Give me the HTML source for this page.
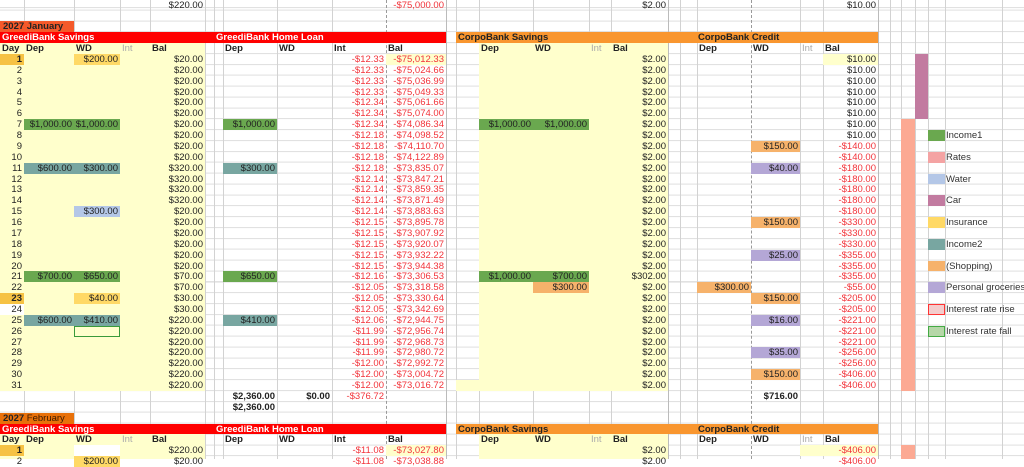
<!DOCTYPE html>
<html><head><meta charset="utf-8"><style>
*{margin:0;padding:0}
body{width:1024px;height:459px;overflow:hidden;position:relative;background:#fff;font-family:"Liberation Sans",Arial,sans-serif;font-size:9.5px;color:#222}
#hg{position:absolute;left:0;top:0;width:1024px;height:459px;background-image:repeating-linear-gradient(to bottom,#dedede 0,#dedede 1px,transparent 1px,transparent 10.87px);background-position:0 9.6px}
.v{position:absolute;top:0;height:459px;width:1px;background:#d2d2d2}
.vd{position:absolute;top:0;height:459px;width:0;border-left:1px dashed #9a9a9a}
.bk{position:absolute}
.r{position:absolute;left:0;width:1024px;height:10.87px}
.r>div{position:absolute;top:0;height:10.87px;line-height:11px;text-align:right;padding-right:2px;box-sizing:border-box;white-space:nowrap;overflow:hidden}
.a{left:0;width:24px}.b{left:24px;width:50px}.c{left:74px;width:46px}.d{left:150px;width:55px}
.e{left:223px;width:54px}.f{left:277px;width:55px}.g{left:332px;width:54px}.h{left:386px;width:60px}
.i{left:479px;width:54px}.j{left:533px;width:56px}.k{left:611px;width:57px}
.l{left:697px;width:54px}.m{left:751px;width:49px}.o{left:823px;width:55px}
.G{background:#6aa84f}.T{background:#78a6a1}.Y{background:#ffd966}.B{background:#b4c7e7}.O{background:#f6b26b}.P{background:#b4a7d6}
.R{color:#f2333a}.D{background:#f6c244;font-weight:bold}.W{background:#fff}
.hd>div{text-align:left;font-weight:bold;padding-left:2px}
.q{color:#aaa;font-weight:normal!important}
.lg{left:928px!important;width:17px}
.lt{left:945px!important;width:79px;text-align:left!important;padding-left:1px;color:#333}
.x{font-weight:bold}
</style></head><body>
<div id="hg"></div>
<div class="v" style="left:24px"></div><div class="v" style="left:74px"></div><div class="v" style="left:120px"></div><div class="v" style="left:150px"></div><div class="v" style="left:205px"></div><div class="v" style="left:214px"></div><div class="v" style="left:223px"></div><div class="v" style="left:277px"></div><div class="v" style="left:332px"></div><div class="vd" style="left:386px"></div><div class="v" style="left:446px;background:#bbb"></div><div class="v" style="left:456px"></div><div class="v" style="left:479px"></div><div class="v" style="left:533px"></div><div class="v" style="left:589px"></div><div class="v" style="left:611px"></div><div class="v" style="left:668px;background:#bbb"></div><div class="v" style="left:680px"></div><div class="v" style="left:697px"></div><div class="vd" style="left:751px"></div><div class="v" style="left:800px"></div><div class="v" style="left:823px"></div><div class="v" style="left:878px;background:#bbb"></div><div class="v" style="left:890px"></div><div class="v" style="left:901px"></div><div class="v" style="left:915px"></div><div class="v" style="left:928px"></div><div class="v" style="left:945px"></div><div class="v" style="left:1002px"></div>

<!-- yellow blocks -->
<div class="bk" style="left:0;top:43.13px;width:205px;height:347.84px;background:#ffffcc"></div>
<div class="bk" style="left:479px;top:43.13px;width:189px;height:347.84px;background:#ffffcc"></div>
<div class="bk" style="left:456px;top:380.1px;width:23px;height:10.87px;background:#ffffcc"></div>
<div class="bk" style="left:386px;top:54px;width:60px;height:10.87px;background:#ffffcc"></div>
<div class="bk" style="left:823px;top:54px;width:55px;height:10.87px;background:#ffffcc"></div>
<div class="bk" style="left:0;top:434.45px;width:205px;height:25px;background:#ffffcc"></div>
<div class="bk" style="left:479px;top:434.45px;width:189px;height:25px;background:#ffffcc"></div>
<div class="bk" style="left:386px;top:445.32px;width:60px;height:10.87px;background:#ffffcc"></div>
<div class="bk" style="left:800px;top:445.32px;width:78px;height:10.87px;background:#ffffcc"></div>
<div class="bk" style="left:0;top:304.01px;width:24px;height:10.87px;background:#fff"></div>
<!-- side bars -->
<div class="bk" style="left:915px;top:54px;width:13px;height:65.2px;background:#c27ba0"></div>
<div class="bk" style="left:901px;top:119.2px;width:14px;height:271.8px;background:#fca993"></div>
<div class="bk" style="left:901px;top:445.32px;width:14px;height:14px;background:#fca993"></div>

<div class="r" style="top:0"><div class="d">$220.00</div><div class="h R">-$75,000.00</div><div class="k">$2.00</div><div class="o">$10.00</div></div>

<div class="bk" style="left:0;top:21.39px;width:74px;height:10.87px;background:#f4592a;line-height:11px;font-weight:bold;padding-left:3px;box-sizing:border-box">2027 January</div>
<div class="bk" style="left:0;top:32.26px;width:446px;height:10.87px;background:#ff0000"></div>
<div class="bk" style="left:456px;top:32.26px;width:422px;height:10.87px;background:#f9962f"></div>
<div class="r hd" style="top:32.26px"><div style="left:0;width:200px;color:#fff">GreediBank Savings</div><div style="left:214px;width:200px;color:#fff">GreediBank Home Loan</div><div style="left:456px;width:200px">CorpoBank Savings</div><div style="left:696px;width:150px">CorpoBank Credit</div></div>
<div class="r hd" style="top:43.13px"><div class="a">Day</div><div class="b">Dep</div><div class="c">WD</div><div style="left:120px;width:30px" class="q">Int</div><div class="d">Bal</div><div class="e">Dep</div><div class="f">WD</div><div class="g">Int</div><div class="h">Bal</div><div class="i">Dep</div><div class="j">WD</div><div style="left:589px;width:22px" class="q">Int</div><div class="k">Bal</div><div class="l">Dep</div><div class="m">WD</div><div style="left:800px;width:23px" class="q">Int</div><div class="o">Bal</div></div>

<div class="r" style="top:54px"><div class="a D">1</div><div class="c Y">$200.00</div><div class="d">$20.00</div><div class="g R">-$12.33</div><div class="h R">-$75,012.33</div><div class="k">$2.00</div><div class="o">$10.00</div></div>
<div class="r" style="top:64.87px"><div class="a">2</div><div class="d">$20.00</div><div class="g R">-$12.33</div><div class="h R">-$75,024.66</div><div class="k">$2.00</div><div class="o">$10.00</div></div>
<div class="r" style="top:75.74px"><div class="a">3</div><div class="d">$20.00</div><div class="g R">-$12.33</div><div class="h R">-$75,036.99</div><div class="k">$2.00</div><div class="o">$10.00</div></div>
<div class="r" style="top:86.61px"><div class="a">4</div><div class="d">$20.00</div><div class="g R">-$12.33</div><div class="h R">-$75,049.33</div><div class="k">$2.00</div><div class="o">$10.00</div></div>
<div class="r" style="top:97.48px"><div class="a">5</div><div class="d">$20.00</div><div class="g R">-$12.34</div><div class="h R">-$75,061.66</div><div class="k">$2.00</div><div class="o">$10.00</div></div>
<div class="r" style="top:108.35px"><div class="a">6</div><div class="d">$20.00</div><div class="g R">-$12.34</div><div class="h R">-$75,074.00</div><div class="k">$2.00</div><div class="o">$10.00</div></div>
<div class="r" style="top:119.22px"><div class="a">7</div><div class="b G">$1,000.00</div><div class="c G">$1,000.00</div><div class="d">$20.00</div><div class="e G">$1,000.00</div><div class="g R">-$12.34</div><div class="h R">-$74,086.34</div><div class="i G">$1,000.00</div><div class="j G">$1,000.00</div><div class="k">$2.00</div><div class="o">$10.00</div></div>
<div class="r" style="top:130.09px"><div class="a">8</div><div class="d">$20.00</div><div class="g R">-$12.18</div><div class="h R">-$74,098.52</div><div class="k">$2.00</div><div class="o">$10.00</div><div class="lg G"></div><div class="lt">Income1</div></div>
<div class="r" style="top:140.96px"><div class="a">9</div><div class="d">$20.00</div><div class="g R">-$12.18</div><div class="h R">-$74,110.70</div><div class="k">$2.00</div><div class="m O">$150.00</div><div class="o R">-$140.00</div></div>
<div class="r" style="top:151.83px"><div class="a">10</div><div class="d">$20.00</div><div class="g R">-$12.18</div><div class="h R">-$74,122.89</div><div class="k">$2.00</div><div class="o R">-$140.00</div><div class="lg" style="background:#f4a3a3"></div><div class="lt">Rates</div></div>
<div class="r" style="top:162.7px"><div class="a">11</div><div class="b T">$600.00</div><div class="c T">$300.00</div><div class="d">$320.00</div><div class="e T">$300.00</div><div class="g R">-$12.18</div><div class="h R">-$73,835.07</div><div class="k">$2.00</div><div class="m P">$40.00</div><div class="o R">-$180.00</div></div>
<div class="r" style="top:173.57px"><div class="a">12</div><div class="d">$320.00</div><div class="g R">-$12.14</div><div class="h R">-$73,847.21</div><div class="k">$2.00</div><div class="o R">-$180.00</div><div class="lg B"></div><div class="lt">Water</div></div>
<div class="r" style="top:184.44px"><div class="a">13</div><div class="d">$320.00</div><div class="g R">-$12.14</div><div class="h R">-$73,859.35</div><div class="k">$2.00</div><div class="o R">-$180.00</div></div>
<div class="r" style="top:195.31px"><div class="a">14</div><div class="d">$320.00</div><div class="g R">-$12.14</div><div class="h R">-$73,871.49</div><div class="k">$2.00</div><div class="o R">-$180.00</div><div class="lg" style="background:#c27ba0"></div><div class="lt">Car</div></div>
<div class="r" style="top:206.18px"><div class="a">15</div><div class="c B">$300.00</div><div class="d">$20.00</div><div class="g R">-$12.14</div><div class="h R">-$73,883.63</div><div class="k">$2.00</div><div class="o R">-$180.00</div></div>
<div class="r" style="top:217.05px"><div class="a">16</div><div class="d">$20.00</div><div class="g R">-$12.15</div><div class="h R">-$73,895.78</div><div class="k">$2.00</div><div class="m O">$150.00</div><div class="o R">-$330.00</div><div class="lg Y"></div><div class="lt">Insurance</div></div>
<div class="r" style="top:227.92px"><div class="a">17</div><div class="d">$20.00</div><div class="g R">-$12.15</div><div class="h R">-$73,907.92</div><div class="k">$2.00</div><div class="o R">-$330.00</div></div>
<div class="r" style="top:238.79px"><div class="a">18</div><div class="d">$20.00</div><div class="g R">-$12.15</div><div class="h R">-$73,920.07</div><div class="k">$2.00</div><div class="o R">-$330.00</div><div class="lg T"></div><div class="lt">Income2</div></div>
<div class="r" style="top:249.66px"><div class="a">19</div><div class="d">$20.00</div><div class="g R">-$12.15</div><div class="h R">-$73,932.22</div><div class="k">$2.00</div><div class="m P">$25.00</div><div class="o R">-$355.00</div></div>
<div class="r" style="top:260.53px"><div class="a">20</div><div class="d">$20.00</div><div class="g R">-$12.15</div><div class="h R">-$73,944.38</div><div class="k">$2.00</div><div class="o R">-$355.00</div><div class="lg O"></div><div class="lt">(Shopping)</div></div>
<div class="r" style="top:271.4px"><div class="a">21</div><div class="b G">$700.00</div><div class="c G">$650.00</div><div class="d">$70.00</div><div class="e G">$650.00</div><div class="g R">-$12.16</div><div class="h R">-$73,306.53</div><div class="i G">$1,000.00</div><div class="j G">$700.00</div><div class="k">$302.00</div><div class="o R">-$355.00</div></div>
<div class="r" style="top:282.27px"><div class="a">22</div><div class="d">$70.00</div><div class="g R">-$12.05</div><div class="h R">-$73,318.58</div><div class="j O">$300.00</div><div class="k">$2.00</div><div class="l O">$300.00</div><div class="o R">-$55.00</div><div class="lg P"></div><div class="lt">Personal groceries</div></div>
<div class="r" style="top:293.14px"><div class="a D">23</div><div class="c Y">$40.00</div><div class="d">$30.00</div><div class="g R">-$12.05</div><div class="h R">-$73,330.64</div><div class="k">$2.00</div><div class="m O">$150.00</div><div class="o R">-$205.00</div></div>
<div class="r" style="top:304.01px"><div class="a">24</div><div class="d">$30.00</div><div class="g R">-$12.05</div><div class="h R">-$73,342.69</div><div class="k">$2.00</div><div class="o R">-$205.00</div><div class="lg" style="background:#f4cccc;border:1px solid #f33;box-sizing:border-box"></div><div class="lt">Interest rate rise</div></div>
<div class="r" style="top:314.88px"><div class="a">25</div><div class="b T">$600.00</div><div class="c T">$410.00</div><div class="d">$220.00</div><div class="e T">$410.00</div><div class="g R">-$12.06</div><div class="h R">-$72,944.75</div><div class="k">$2.00</div><div class="m P">$16.00</div><div class="o R">-$221.00</div></div>
<div class="r" style="top:325.75px"><div class="a">26</div><div class="c" style="border:1px solid #3a9a3a"></div><div class="d">$220.00</div><div class="g R">-$11.99</div><div class="h R">-$72,956.74</div><div class="k">$2.00</div><div class="o R">-$221.00</div><div class="lg" style="background:#b6d7a8;border:1px solid #4a4;box-sizing:border-box"></div><div class="lt">Interest rate fall</div></div>
<div class="r" style="top:336.62px"><div class="a">27</div><div class="d">$220.00</div><div class="g R">-$11.99</div><div class="h R">-$72,968.73</div><div class="k">$2.00</div><div class="o R">-$221.00</div></div>
<div class="r" style="top:347.49px"><div class="a">28</div><div class="d">$220.00</div><div class="g R">-$11.99</div><div class="h R">-$72,980.72</div><div class="k">$2.00</div><div class="m P">$35.00</div><div class="o R">-$256.00</div></div>
<div class="r" style="top:358.36px"><div class="a">29</div><div class="d">$220.00</div><div class="g R">-$12.00</div><div class="h R">-$72,992.72</div><div class="k">$2.00</div><div class="o R">-$256.00</div></div>
<div class="r" style="top:369.23px"><div class="a">30</div><div class="d">$220.00</div><div class="g R">-$12.00</div><div class="h R">-$73,004.72</div><div class="k">$2.00</div><div class="m O">$150.00</div><div class="o R">-$406.00</div></div>
<div class="r" style="top:380.1px"><div class="a">31</div><div class="d">$220.00</div><div class="g R">-$12.00</div><div class="h R">-$73,016.72</div><div class="k">$2.00</div><div class="o R">-$406.00</div></div>
<div class="r" style="top:390.97px"><div class="e x">$2,360.00</div><div class="f x">$0.00</div><div class="g R">-$376.72</div><div class="m x">$716.00</div></div>
<div class="r" style="top:401.84px"><div class="e x">$2,360.00</div></div>

<div class="bk" style="left:0;top:412.71px;width:74px;height:10.87px;background:#e8710a;line-height:11px;padding-left:3px;box-sizing:border-box;color:#3a1a00"><b style="color:#222">2027</b> February</div>
<div class="bk" style="left:0;top:423.58px;width:446px;height:10.87px;background:#ff0000"></div>
<div class="bk" style="left:456px;top:423.58px;width:422px;height:10.87px;background:#f9962f"></div>
<div class="r hd" style="top:423.58px"><div style="left:0;width:200px;color:#fff">GreediBank Savings</div><div style="left:214px;width:200px;color:#fff">GreediBank Home Loan</div><div style="left:456px;width:200px">CorpoBank Savings</div><div style="left:696px;width:150px">CorpoBank Credit</div></div>
<div class="r hd" style="top:434.45px"><div class="a">Day</div><div class="b">Dep</div><div class="c">WD</div><div style="left:120px;width:30px" class="q">Int</div><div class="d">Bal</div><div class="e">Dep</div><div class="f">WD</div><div class="g">Int</div><div class="h">Bal</div><div class="i">Dep</div><div class="j">WD</div><div style="left:589px;width:22px" class="q">Int</div><div class="k">Bal</div><div class="l">Dep</div><div class="m">WD</div><div style="left:800px;width:23px" class="q">Int</div><div class="o">Bal</div></div>
<div class="r" style="top:445.32px"><div class="a D">1</div><div class="c W"></div><div class="d">$220.00</div><div class="g R">-$11.08</div><div class="h R">-$73,027.80</div><div class="k">$2.00</div><div class="o R">-$406.00</div></div>
<div class="r" style="top:456.19px"><div class="a">2</div><div class="c Y">$200.00</div><div class="d">$20.00</div><div class="g R">-$11.08</div><div class="h R">-$73,038.88</div><div class="k">$2.00</div><div class="o R">-$406.00</div></div>
</body></html>
